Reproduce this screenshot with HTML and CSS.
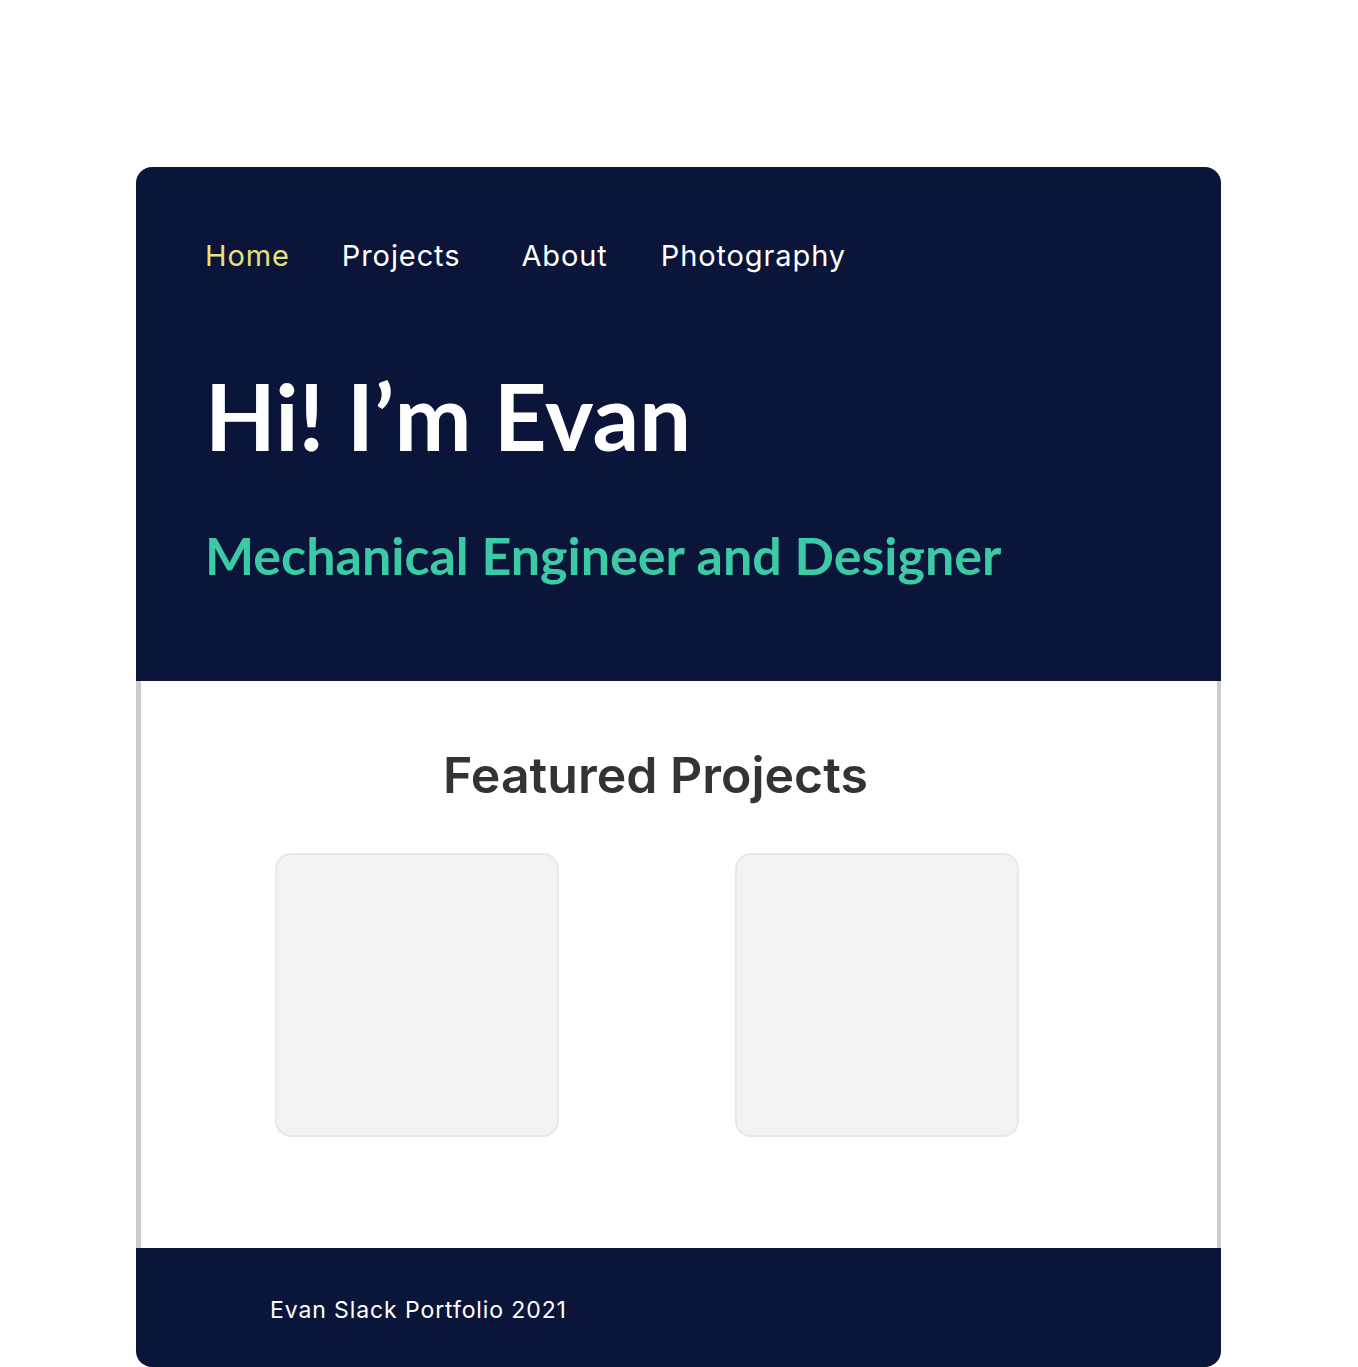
FILE: index.html
```html
<!DOCTYPE html>
<html lang="en">
<head>
<meta charset="utf-8">
<title>Evan Slack Portfolio</title>
<link rel="stylesheet" href="styles.css">
</head>
<body>
<div class="page">
  <div class="card">
    <header class="hero">
      <nav class="nav">
        <a class="nav-link active" href="#">Home</a>
        <a class="nav-link projects" href="#">Projects</a>
        <a class="nav-link about" href="#">About</a>
        <a class="nav-link" href="#">Photography</a>
      </nav>
      <h1 class="title">Hi! I’m Evan</h1>
      <p class="subtitle">Mechanical Engineer and Designer</p>
    </header>
    <main class="featured">
      <h2 class="featured-title">Featured Projects</h2>
      <div class="tiles">
        <div class="tile"></div>
        <div class="tile"></div>
      </div>
    </main>
    <footer class="footer">
      <p class="footer-text">Evan Slack Portfolio 2021</p>
    </footer>
  </div>
</div>
</body>
</html>
```
FILE: styles.css
```css
* { box-sizing: border-box; }
html, body { margin: 0; padding: 0; background: #ffffff; }
.page { padding-top: 167px; }
.card { width: 1085px; margin-left: 136px; }
.hero {
  background: #0b1539;
  border-radius: 16px 16px 0 0;
  height: 514px;
  padding: 68px 0 0 69px;
}
.nav { display: flex; height: 40px; align-items: center; }
.nav-link {
  font-family: "Inter", sans-serif;
  font-size: 29px;
  color: #ffffff;
  text-decoration: none;
  letter-spacing: 0.9px;
  margin-right: 52px;
}
.nav-link.active { color: #e6e17a; }
.nav-link.projects { margin-right: 61px; }
.nav-link.about { margin-right: 53px; }
.title {
  font-family: "Lato", sans-serif;
  font-weight: 700;
  font-size: 92px;
  line-height: 110px;
  color: #ffffff;
  margin: 86px 0 0 0;
}
.subtitle {
  font-family: "Lato", sans-serif;
  font-weight: 700;
  font-size: 52px;
  line-height: 64px;
  color: #3cc9a5;
  margin: 52px 0 0 0;
}
.featured {
  height: 567px;
  background: #ffffff;
  border-left: 5px solid #cccccc;
  border-right: 4px solid #cccccc;
  padding-top: 64px;
}
.featured-title {
  font-family: "Inter", sans-serif;
  font-weight: 600;
  font-size: 50px;
  line-height: 60px;
  color: #333333;
  margin: 0;
  text-align: center;
  padding-right: 47px;
}
.tiles {
  display: flex;
  gap: 176px;
  padding-left: 134px;
  margin-top: 48px;
}
.tile {
  width: 284px;
  height: 284px;
  background: #f3f3f3;
  border: 2px solid #e8e8e8;
  border-radius: 16px;
}
.footer {
  background: #0b1539;
  height: 119px;
  border-radius: 0 0 16px 16px;
  padding: 48px 0 0 134px;
}
.footer-text {
  margin: 0;
  font-family: "Inter", sans-serif;
  font-size: 23px;
  line-height: 28px;
  color: #ffffff;
  letter-spacing: 0.9px;
}
```
